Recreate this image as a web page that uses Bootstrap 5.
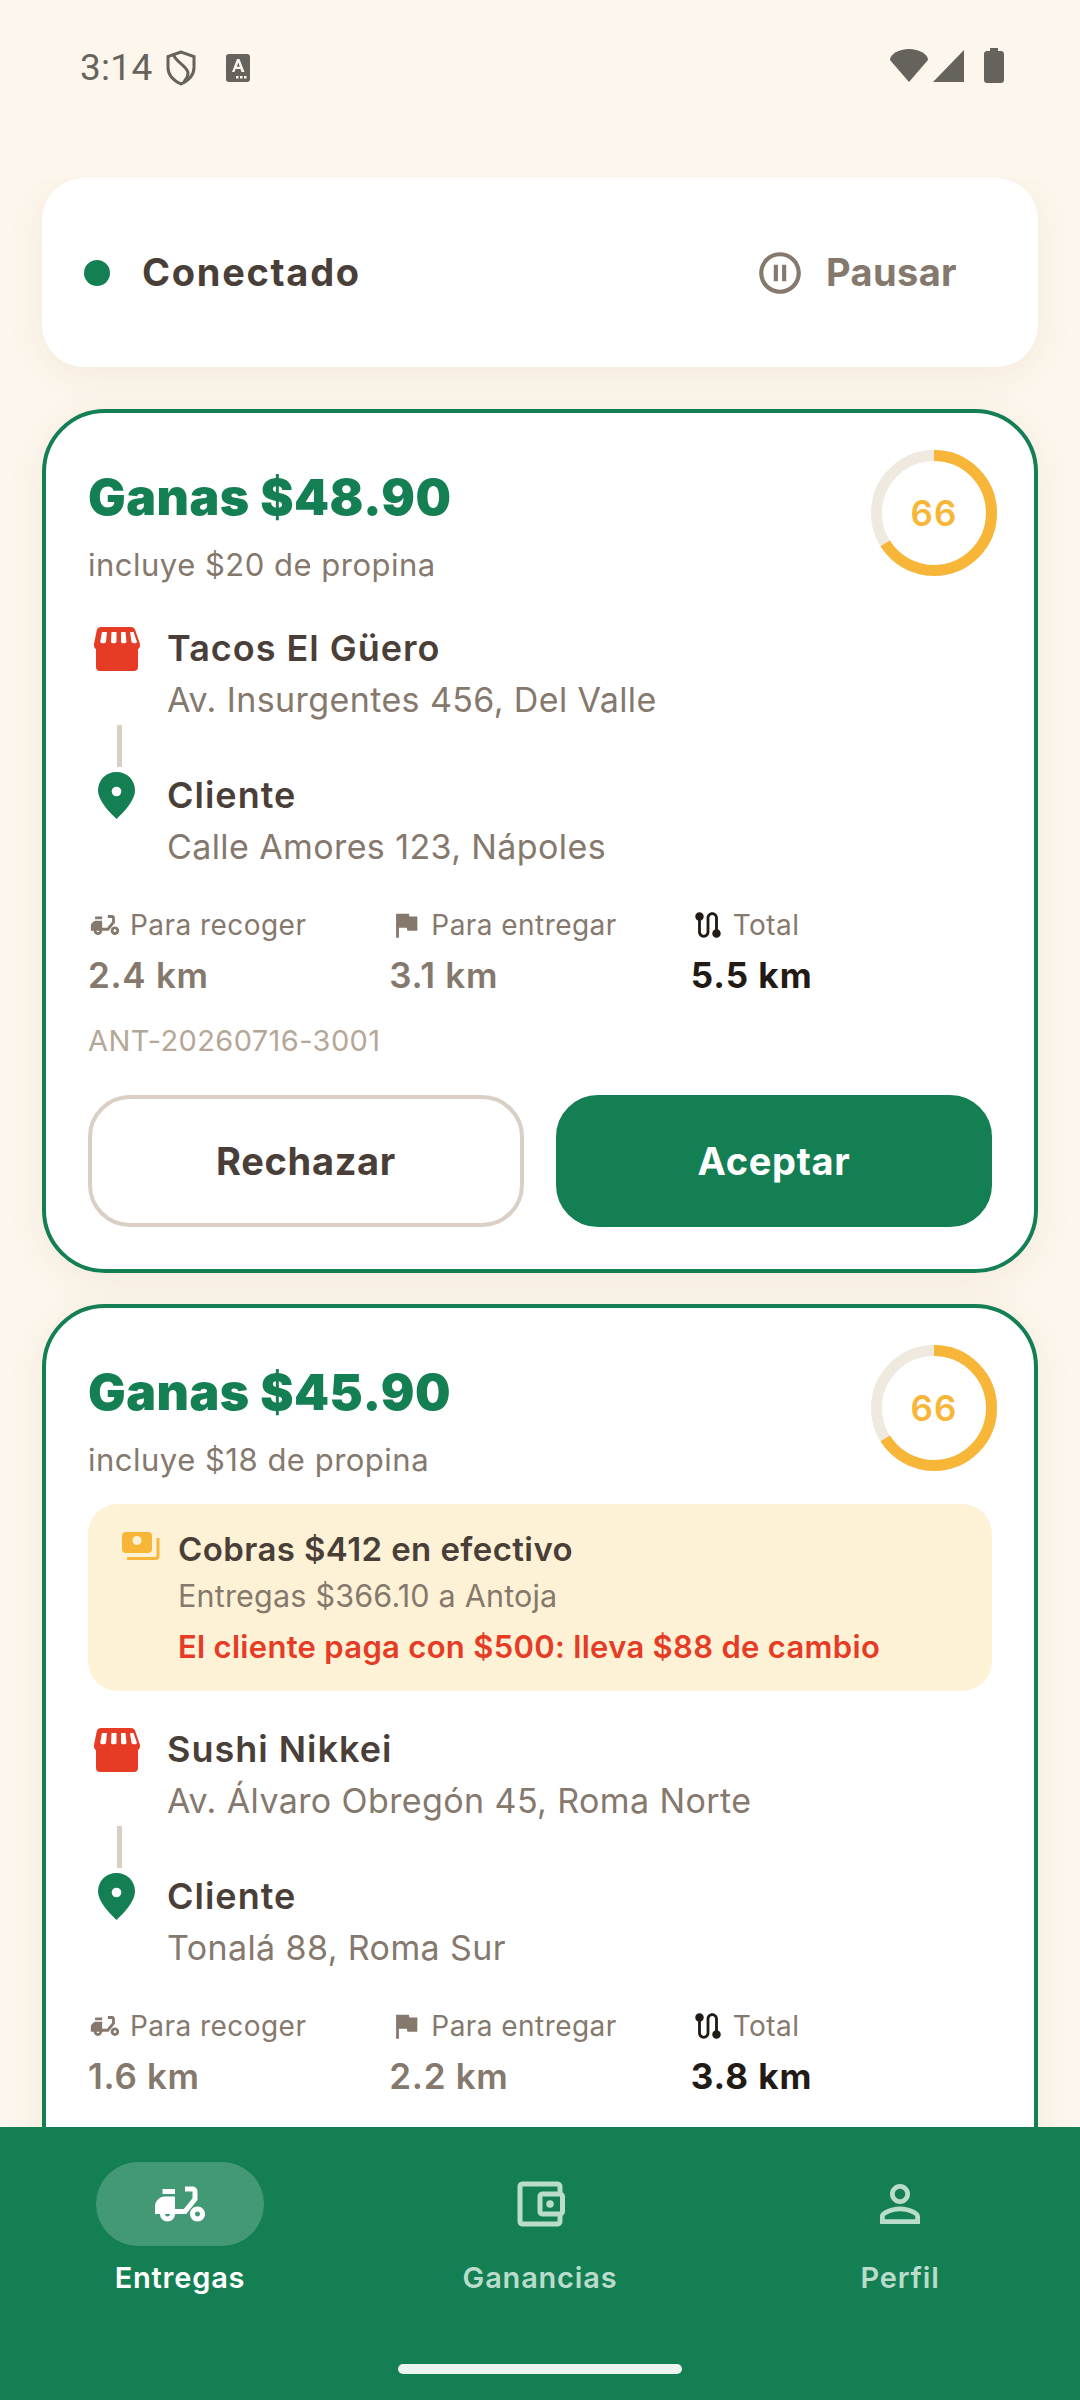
<!DOCTYPE html>
<html lang="es">

<head>
  <meta charset="UTF-8">
  <meta name="viewport" content="width=device-width, initial-scale=1.0">
  <title>Entregas</title>
  <link href="https://cdn.jsdelivr.net/npm/bootstrap@5.3.0/dist/css/bootstrap.min.css" rel="stylesheet">
  <style>
    html, body { height: 2400px; overflow: hidden; }
    body {
      background-color: #fdf6ec;
      font-family: "Inter", "Liberation Sans", sans-serif;
      color: #4a3f38;
    }
    .app-shell { height: 2400px; }
    .status-strip { height: 178px; padding: 48px 76px 0 80px; color: #66635d; flex: none; }
    .status-time { font-family: "Roboto", sans-serif; font-size: 37px; line-height: 40px; letter-spacing: .3px; }
    .shield-ico { margin-left: 13px; }
    .lang-ico { margin-left: 30px; }
    .signal-ico { margin-left: 4px; }
    .battery-ico { margin-left: 20px; }
    .scroll-area { padding: 0 42px; min-height: 0; overflow: hidden; }
    .online-card {
      height: 189px; border: 0; border-radius: 42px; padding: 0 81px 0 42px;
      box-shadow: 0 8px 40px rgba(120, 90, 50, .07);
      margin-bottom: 42px; flex: none;
    }
    .online-dot { width: 26px; height: 26px; border-radius: 50%; background: #157f54; margin-right: 32px; }
    .online-label { font-size: 38px; font-weight: 700; letter-spacing: 1.7px; }
    .pause-label { font-size: 38px; font-weight: 700; color: #85786d; margin-left: 21px; letter-spacing: .4px; }
    .offer-card {
      border: 4px solid #157f54; border-radius: 63px; padding: 0 42px;
      box-shadow: 0 8px 40px rgba(120, 90, 50, .07);
      margin-bottom: 31px; flex: none; background: #fff; position: relative;
    }
    .offer-cut { min-height: 900px; }
    .offer-head { height: 196px; padding-top: 54px; }
    .earn-title { font-family: "Inter", sans-serif; font-weight: 900; font-size: 50px; line-height: 60px; letter-spacing: .5px; color: #157f54; }
    .tip-line { font-size: 31px; line-height: 40px; color: #85786d; margin-top: 18px; letter-spacing: .5px; }
    .score-ring { position: absolute; top: 37px; right: 37px; width: 126px; height: 126px; }
    .score-num { font-size: 35px; font-weight: 600; color: #f7b638; letter-spacing: 1.2px; }
    .stop-first { margin-top: 17px; }
    .cash-box { background: #fef2d6; border-radius: 30px; height: 187px; padding: 26px 30px 0 32px; margin-bottom: 36px; }
    .cash-icon { margin: 2px 18px 0 0; flex: none; }
    .cash-title { font-size: 33px; font-weight: 600; line-height: 38px; letter-spacing: .4px; }
    .cash-sub { font-size: 30.5px; line-height: 40px; color: #85786d; margin-top: 8px; letter-spacing: .2px; }
    .cash-warn { font-size: 31px; font-weight: 600; line-height: 40px; color: #e63b25; margin-top: 11px; letter-spacing: .3px; }
    .stop-line { height: 96px; }
    .stop-next { margin-top: 51px; }
    .stop-icon { width: 79px; flex: none; padding-left: 2px; }
    .stop-pin { margin-top: -1px; }
    .stop-title { font-size: 36px; font-weight: 600; line-height: 44px; letter-spacing: 1px; }
    .stop-addr { font-size: 34px; line-height: 44px; color: #85786d; margin-top: 8px; letter-spacing: .4px; }
    .joint-wrap { height: 0; position: relative; }
    .stop-joint { position: absolute; left: 29px; top: 3px; width: 5px; height: 42px; background: #d9cfc4; }
    .stat-row { margin-top: 38px; }
    .stat-label { font-size: 28px; line-height: 36px; color: #85786d; letter-spacing: .45px; }
    .stat-value { font-size: 35px; font-weight: 600; line-height: 44px; color: #85786d; margin-top: 10px; letter-spacing: .7px; }
    .stat-total { color: #211a15; font-weight: 700; letter-spacing: 1px; }
    .order-code { font-size: 29px; line-height: 36px; color: #b5a797; margin-top: 26px; letter-spacing: .4px; }
    .action-row { margin-top: 36px; padding-bottom: 42px; gap: 32px; }
    .btn-deny, .btn-take { flex: 1 1 0; height: 132px; border-radius: 42px; font-size: 38px; font-weight: 700; letter-spacing: .7px; }
    .btn-deny { border: 4px solid #d9cfc4; background: #fff; color: #4a3f38; }
    .btn-take { border: 4px solid #157f54; background: #157f54; color: #fff; }
    .tab-bar { height: 273px; background: #157f54; flex: none; position: relative; }
    .tab-item { width: 360px; padding-top: 35px; color: #b9dccb; }
    .tab-pill { width: 168px; height: 84px; border-radius: 42px; }
    .tab-item.is-on { color: #fff; }
    .tab-item.is-on .tab-pill { background: rgba(255, 255, 255, .2); }
    .tab-text { font-size: 29px; font-weight: 600; line-height: 36px; margin-top: 14px; letter-spacing: .8px; }
    .home-pill { position: absolute; left: 398px; top: 237px; width: 284px; height: 10px; border-radius: 5px; background: #ebf4ef; }
  </style>
</head>

<body>
  <div class="app-shell d-flex flex-column">

    <!-- status bar -->
    <div class="status-strip d-flex justify-content-between align-items-start">
      <div class="d-flex align-items-center">
        <span class="status-time">3:14</span>
        <svg class="shield-ico" width="30" height="36" viewBox="0 0 30 36" fill="none" stroke="#66635d" stroke-width="3"><path d="M15 2 2 6.500v11c0 7.500 5.500 13 13 16.500 7.500-3.500 13-9 13-16.500v-11z"/><path d="M8 5c0 6 14 11 14 18 0 3-1.500 6-4 8.500"/></svg>
        <svg class="lang-ico" width="24" height="28" viewBox="0 0 24 28"><rect width="24" height="28" rx="3" fill="#66635d"/><path d="M6 18 11 5h2.500l5 13h-3l-1-3h-5l-1 3zm4.800-5.200h3L12.300 8.500z" fill="#fdf6ec"/><path d="M10 22h2.500v2.500H10zm4 0h2.500v2.500H14zm4 0h2.500v2.500H18z" fill="#fdf6ec"/></svg>
      </div>
      <div class="d-flex align-items-center">
        <svg width="40" height="33" viewBox="0 0 40 33"><path d="M20 33 1 11C1 5 10 0 20 0s19 5 19 11z" fill="#66635d"/></svg>
        <svg class="signal-ico" width="31" height="32" viewBox="0 0 31 32"><path d="M31 0v32H0z" fill="#66635d"/></svg>
        <svg class="battery-ico" width="20" height="35" viewBox="0 0 20 35"><path d="M6 0h8v3h3c1.700 0 3 1.300 3 3v26c0 1.700-1.300 3-3 3H3c-1.700 0-3-1.300-3-3V6c0-1.700 1.300-3 3-3h3z" fill="#66635d"/></svg>
      </div>
    </div>

    <div class="scroll-area flex-grow-1 d-flex flex-column">

      <div class="card online-card flex-row align-items-center">
        <span class="online-dot"></span>
        <span class="online-label">Conectado</span>
        <div class="ms-auto d-flex align-items-center">
          <svg width="50" height="50" viewBox="0 0 24 24" fill="#85786d"><path d="M9 16h2V8H9v8zm3-14C6.480 2 2 6.480 2 12s4.480 10 10 10 10-4.480 10-10S17.520 2 12 2zm0 18c-4.410 0-8-3.590-8-8s3.590-8 8-8 8 3.590 8 8-3.590 8-8 8zm1-4h2V8h-2v8z"/></svg>
          <span class="pause-label">Pausar</span>
        </div>
      </div>

      <!-- first offer -->
      <div class="offer-card">
        <div class="offer-head">
          <div class="earn-title">Ganas $48.90</div>
          <div class="tip-line">incluye $20 de propina</div>
        </div>
        <div class="score-ring d-flex align-items-center justify-content-center">
          <svg class="position-absolute top-0 start-0" width="126" height="126" viewBox="0 0 126 126"><circle cx="63" cy="63" r="57.500" fill="none" stroke="#efe9df" stroke-width="11"/><circle cx="63" cy="63" r="57.500" fill="none" stroke="#f7b638" stroke-width="11" stroke-dasharray="238.500 361.300" transform="rotate(-90 63 63)"/></svg>
          <span class="score-num">66</span>
        </div>
        <div class="stop-line stop-first d-flex">
          <div class="stop-icon"><svg width="52" height="48" viewBox="0 0 52 48"><use href="#ico-store"/></svg></div>
          <div><div class="stop-title">Tacos El Güero</div><div class="stop-addr">Av. Insurgentes 456, Del Valle</div></div>
        </div>
        <div class="joint-wrap"><div class="stop-joint"></div></div>
        <div class="stop-line stop-next d-flex">
          <div class="stop-icon"><svg class="stop-pin" width="52" height="48" viewBox="0 0 52 48"><use href="#ico-pin"/></svg></div>
          <div><div class="stop-title">Cliente</div><div class="stop-addr">Calle Amores 123, Nápoles</div></div>
        </div>
        <div class="row g-0 stat-row">
          <div class="col-4"><div class="stat-label d-flex align-items-center gap-2"><svg width="34" height="34" viewBox="0 0 24 24" fill="#85786d"><use href="#ico-moped"/></svg>Para recoger</div><div class="stat-value">2.4 km</div></div>
          <div class="col-4"><div class="stat-label d-flex align-items-center gap-2"><svg width="34" height="34" viewBox="0 0 24 24" fill="#85786d"><use href="#ico-flag"/></svg>Para entregar</div><div class="stat-value">3.1 km</div></div>
          <div class="col-4"><div class="stat-label d-flex align-items-center gap-2"><svg width="34" height="34" viewBox="0 0 24 24" fill="#211a15"><use href="#ico-route"/></svg>Total</div><div class="stat-value stat-total">5.5 km</div></div>
        </div>
        <div class="order-code">ANT-20260716-3001</div>
        <div class="action-row d-flex">
          <button class="btn btn-deny">Rechazar</button>
          <button class="btn btn-take">Aceptar</button>
        </div>
      </div>

      <!-- second offer, runs under the tab bar -->
      <div class="offer-card offer-cut">
        <div class="offer-head">
          <div class="earn-title">Ganas $45.90</div>
          <div class="tip-line">incluye $18 de propina</div>
        </div>
        <div class="score-ring d-flex align-items-center justify-content-center">
          <svg class="position-absolute top-0 start-0" width="126" height="126" viewBox="0 0 126 126"><circle cx="63" cy="63" r="57.500" fill="none" stroke="#efe9df" stroke-width="11"/><circle cx="63" cy="63" r="57.500" fill="none" stroke="#f7b638" stroke-width="11" stroke-dasharray="238.500 361.300" transform="rotate(-90 63 63)"/></svg>
          <span class="score-num">66</span>
        </div>
        <div class="cash-box d-flex">
          <svg class="cash-icon" width="40" height="28" viewBox="0 0 40 28"><rect x="2" y="0" width="30" height="21" rx="4" fill="#f7b638"/><circle cx="17" cy="8.500" r="4.500" fill="#fef2d6"/><path d="M38 6v18a2.500 2.500 0 0 1-2.500 2.500H7" fill="none" stroke="#f7b638" stroke-width="3"/></svg>
          <div>
            <div class="cash-title">Cobras $412 en efectivo</div>
            <div class="cash-sub">Entregas $366.10 a Antoja</div>
            <div class="cash-warn">El cliente paga con $500: lleva $88 de cambio</div>
          </div>
        </div>
        <div class="stop-line d-flex">
          <div class="stop-icon"><svg width="52" height="48" viewBox="0 0 52 48"><use href="#ico-store"/></svg></div>
          <div><div class="stop-title">Sushi Nikkei</div><div class="stop-addr">Av. Álvaro Obregón 45, Roma Norte</div></div>
        </div>
        <div class="joint-wrap"><div class="stop-joint"></div></div>
        <div class="stop-line stop-next d-flex">
          <div class="stop-icon"><svg class="stop-pin" width="52" height="48" viewBox="0 0 52 48"><use href="#ico-pin"/></svg></div>
          <div><div class="stop-title">Cliente</div><div class="stop-addr">Tonalá 88, Roma Sur</div></div>
        </div>
        <div class="row g-0 stat-row">
          <div class="col-4"><div class="stat-label d-flex align-items-center gap-2"><svg width="34" height="34" viewBox="0 0 24 24" fill="#85786d"><use href="#ico-moped"/></svg>Para recoger</div><div class="stat-value">1.6 km</div></div>
          <div class="col-4"><div class="stat-label d-flex align-items-center gap-2"><svg width="34" height="34" viewBox="0 0 24 24" fill="#85786d"><use href="#ico-flag"/></svg>Para entregar</div><div class="stat-value">2.2 km</div></div>
          <div class="col-4"><div class="stat-label d-flex align-items-center gap-2"><svg width="34" height="34" viewBox="0 0 24 24" fill="#211a15"><use href="#ico-route"/></svg>Total</div><div class="stat-value stat-total">3.8 km</div></div>
        </div>
      </div>
    </div>

    <!-- bottom tabs -->
    <nav class="tab-bar d-flex">
      <div class="tab-item is-on d-flex flex-column align-items-center">
        <div class="tab-pill d-flex align-items-center justify-content-center"><svg width="60" height="60" viewBox="0 0 24 24" fill="#fff"><use href="#ico-moped"/></svg></div>
        <div class="tab-text">Entregas</div>
      </div>
      <div class="tab-item d-flex flex-column align-items-center">
        <div class="tab-pill d-flex align-items-center justify-content-center"><svg width="60" height="60" viewBox="0 0 24 24" fill="#b9dccb"><path d="M21 7.280V5c0-1.100-.9-2-2-2H5c-1.110 0-2 .9-2 2v14c0 1.100.89 2 2 2h14c1.100 0 2-.9 2-2v-2.280c.59-.35 1-.98 1-1.720V9c0-.74-.41-1.380-1-1.720zM20 9v6h-7V9h7zM5 19V5h14v2h-6c-1.100 0-2 .9-2 2v6c0 1.100.9 2 2 2h6v2H5z"/><circle cx="16" cy="12" r="1.500"/></svg></div>
        <div class="tab-text">Ganancias</div>
      </div>
      <div class="tab-item d-flex flex-column align-items-center">
        <div class="tab-pill d-flex align-items-center justify-content-center"><svg width="60" height="60" viewBox="0 0 24 24" fill="#b9dccb"><path d="M12 5.900c1.160 0 2.100.94 2.100 2.100s-.94 2.100-2.100 2.100S9.900 9.160 9.900 8s.94-2.100 2.100-2.100m0 9c2.970 0 6.100 1.460 6.100 2.100v1.100H5.900V17c0-.64 3.130-2.100 6.100-2.100M12 4C9.790 4 8 5.790 8 8s1.790 4 4 4 4-1.790 4-4-1.790-4-4-4zm0 9c-2.670 0-8 1.340-8 4v3h16v-3c0-2.660-5.330-4-8-4z"/></svg></div>
        <div class="tab-text">Perfil</div>
      </div>
      <div class="home-pill"></div>
    </nav>
  </div>

  <!-- shared icons -->
  <svg width="0" height="0" class="position-absolute">
    <defs>
      <g id="ico-store">
        <path d="M11 1h30c2 0 3.500 1 4.200 3L50 18c.5 2.500-1 4.800-2 5.300V41c0 2.400-1.600 4-4 4H10c-2.400 0-4-1.600-4-4V23.300c-1-.5-2.500-2.800-2-5.300L6.800 4C7.500 2 9 1 11 1z" fill="#e63b25"/>
        <path d="M12 6h5l-1 10c-.6 1.800-5 1.800-5.800 0zM21.500 6h5v10c-.6 1.800-5 1.800-5.500 0zM31 6h4.500l1 10c-.6 1.800-5 1.800-5.500 0zM40 6h3.500L47 16c-.6 1.800-4.500 1.800-5.500 0z" fill="#fff"/>
      </g>
      <g id="ico-pin"><path d="M26.500 0C16 0 8 8 8 18.500 8 28 18 39 26.500 47 35 39 45 28 45 18.500 45 8 37 0 26.500 0z" fill="#157f54"/><circle cx="26.500" cy="19.500" r="4.800" fill="#fff"/></g>
      <path id="ico-moped" d="M19 7c0-1.100-.9-2-2-2h-3v2h3v2.650L13.520 14H10V9H6c-2.210 0-4 1.790-4 4v3h2c0 1.660 1.340 3 3 3s3-1.340 3-3h4.480L19 10.350V7zM7 17c-.55 0-1-.45-1-1h2c0 .55-.45 1-1 1zM5 6h5v2H5zM19 13c-1.660 0-3 1.340-3 3s1.340 3 3 3 3-1.340 3-3-1.340-3-3-3zm0 4c-.55 0-1-.45-1-1s.45-1 1-1 1 .45 1 1-.45 1-1 1z"/>
      <path id="ico-flag" d="M14.400 6 14 4H5v17h2v-7h5.600l.4 2h7V6z"/>
      <path id="ico-route" d="M19 15.180V7c0-2.210-1.790-4-4-4s-4 1.790-4 4v10c0 1.100-.9 2-2 2s-2-.9-2-2V8.820C8.160 8.400 9 7.300 9 6c0-1.660-1.340-3-3-3S3 4.340 3 6c0 1.300.84 2.400 2 2.820V17c0 2.210 1.790 4 4 4s4-1.790 4-4V7c0-1.100.9-2 2-2s2 .9 2 2v8.180c-1.160.41-2 1.510-2 2.820 0 1.660 1.340 3 3 3s3-1.340 3-3c0-1.300-.84-2.400-2-2.820z"/>
    </defs>
  </svg>
</body>

</html>
